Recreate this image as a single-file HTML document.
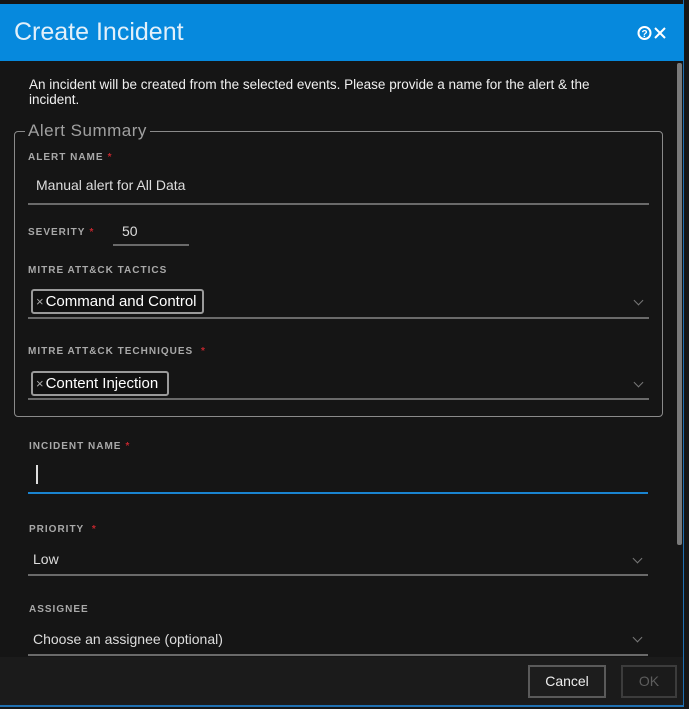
<!DOCTYPE html>
<html><head><style>
*{box-sizing:border-box;margin:0;padding:0}
body{width:689px;height:709px;background:#161616;font-family:"Liberation Sans",sans-serif;position:relative;overflow:hidden;color:#e6e6e6}
.dlg{position:absolute;left:0;top:0;width:684px;height:707px;background:#151515;border-right:1px solid #1f6fb0;border-bottom:2px solid #1f6fb0}
.hdr{position:absolute;left:0;top:4px;width:684px;height:57px;background:#0689dd}
.hdr .t{position:absolute;left:14px;top:14px;font-size:25px;color:#e2f0fa}
.abs{position:absolute}
.lbl{position:absolute;font-size:10px;font-weight:bold;letter-spacing:1px;color:#a9a9a9}
.lbl b{color:#c0262d;margin-left:4px}
.line{position:absolute;height:2px;background:#6a6a6a}
.val{position:absolute;font-size:14px;color:#ddd}
.tag{position:absolute;height:25px;border:2px solid #9a9a9a;border-radius:3px;font-size:15px;color:#fff;padding:2px 4px 0 3px;background:#111;white-space:nowrap}
.tag span{color:#aaa;font-size:13px;margin-right:2px}
.chev{position:absolute;width:7px;height:7px;border-right:1px solid #777;border-bottom:1px solid #777;transform:rotate(45deg)}
.btn{position:absolute;height:33px;border:2px solid #5a5a5a;font-size:14px;text-align:center;line-height:29px}
</style></head><body>
<div class="dlg">
<div class="hdr"><div class="t">Create Incident</div>
<svg class="abs" style="left:637px;top:21px" width="34" height="16" viewBox="0 0 34 16">
<circle cx="7.5" cy="8" r="6" fill="none" stroke="#fff" stroke-width="2"/>
<text x="7.5" y="12" font-size="10" font-weight="bold" fill="#fff" text-anchor="middle" font-family="Liberation Sans">?</text>
<path d="M18 3 L28 13 M28 3 L18 13" stroke="#fff" stroke-width="2"/>
</svg></div>
<div class="abs" style="left:29px;top:77px;width:600px;font-size:13.5px;line-height:15px;color:#f0f0f0">An incident will be created from the selected events. Please provide a name for the alert &amp; the incident.</div>
<div class="abs" style="left:14px;top:131px;width:649px;height:286px;border:1px solid #8a8a8a;border-radius:4px"></div>
<div class="abs" style="left:25px;top:121px;background:#151515;padding:0 3px;font-size:17px;color:#a0a0a0;letter-spacing:.5px">Alert Summary</div>
<div class="lbl" style="left:28px;top:152px">ALERT NAME<b>*</b></div>
<div class="val" style="left:36px;top:177px">Manual alert for All Data</div>
<div class="line" style="left:28px;top:203px;width:621px"></div>
<div class="lbl" style="left:28px;top:227px">SEVERITY<b>*</b></div>
<div class="val" style="left:122px;top:223px">50</div>
<div class="line" style="left:113px;top:244px;width:76px"></div>
<div class="lbl" style="left:28px;top:265px">MITRE ATT&amp;CK TACTICS</div>
<div class="tag" style="left:31px;top:289px;width:173px"><span>×</span>Command and Control</div>
<div class="chev" style="left:635px;top:297px"></div>
<div class="line" style="left:28px;top:317px;width:621px"></div>
<div class="lbl" style="left:28px;top:346px">MITRE ATT&amp;CK TECHNIQUES <b>*</b></div>
<div class="tag" style="left:31px;top:371px;width:138px"><span>×</span>Content Injection</div>
<div class="chev" style="left:635px;top:379px"></div>
<div class="line" style="left:28px;top:398px;width:621px"></div>
<div class="lbl" style="left:29px;top:441px">INCIDENT NAME<b>*</b></div>
<div class="abs" style="left:36px;top:465px;width:2px;height:19px;background:#ddd"></div>
<div class="line" style="left:28px;top:492px;width:620px;background:#1a84d0"></div>
<div class="lbl" style="left:29px;top:524px">PRIORITY <b>*</b></div>
<div class="val" style="left:33px;top:551px">Low</div>
<div class="chev" style="left:634px;top:555px"></div>
<div class="line" style="left:28px;top:574px;width:620px"></div>
<div class="lbl" style="left:29px;top:604px">ASSIGNEE</div>
<div class="val" style="left:33px;top:631px">Choose an assignee (optional)</div>
<div class="chev" style="left:634px;top:634px"></div>
<div class="line" style="left:28px;top:654px;width:620px"></div>
<div class="abs" style="left:0;top:657px;width:683px;height:48px;background:#1b1b1b"></div>
<div class="btn" style="left:528px;top:665px;width:78px;color:#eee;background:#1d1d1d">Cancel</div>
<div class="btn" style="left:621px;top:665px;width:56px;color:#5d5d5d;border-color:#3c3c3c">OK</div>
<div class="abs" style="left:677px;top:63px;width:5px;height:482px;background:#7a7a7a;border-radius:2px"></div>
</div>
</body></html>
